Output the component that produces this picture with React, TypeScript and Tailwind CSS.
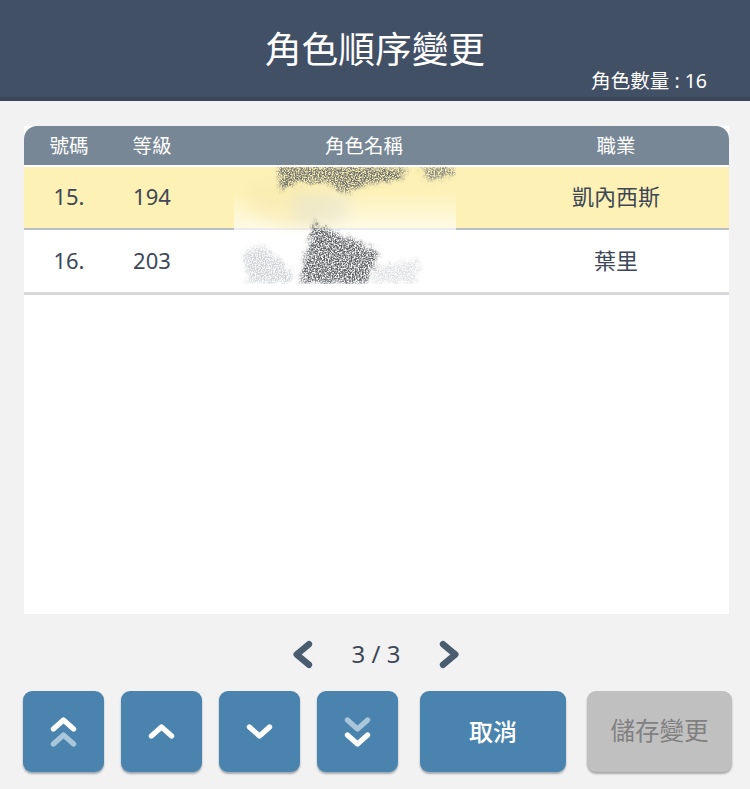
import React from "react";

const FONT = "[font-family:'Noto_Sans','Noto_Sans_CJK_TC',sans-serif]";

function Chevron({ dir, className = "", w = 24 }: { dir: "up" | "down" | "left" | "right"; className?: string; w?: number }) {
  const d = {
    up: "M3 12 L12 4 L21 12",
    down: "M3 4 L12 12 L21 4",
    left: "M13 4 L3.5 12 L13 20",
    right: "M3 4 L12.5 12 L3 20",
  }[dir];
  return (
    <svg width={w} height={w} viewBox={dir === "up" || dir === "down" ? "0 0 24 16" : "0 0 16 24"} className={className} fill="none">
      <path d={d} stroke="currentColor" strokeWidth={dir === "left" || dir === "right" ? 5 : 4.6} strokeLinecap="round" strokeLinejoin="round" />
    </svg>
  );
}

function SquareButton({ children }: { children: React.ReactNode }) {
  return (
    <button className="w-[81px] h-[81px] rounded-[9px] bg-[#4a84ae] shadow-[0_2px_2px_rgba(60,80,100,0.45)] flex flex-col items-center justify-center text-white">
      {children}
    </button>
  );
}

function Art() {
  return (
    <svg className="absolute left-[234px] top-[167px] pointer-events-none" width="222" height="117" viewBox="0 0 222 117">
      <defs>
        <linearGradient id="fade" x1="0" y1="0" x2="0" y2="1">
          <stop offset="0" stopColor="#fff" stopOpacity="0" />
          <stop offset="0.22" stopColor="#fff" stopOpacity="0.04" />
          <stop offset="0.3" stopColor="#fff" stopOpacity="0.2" />
          <stop offset="0.5" stopColor="#fff" stopOpacity="0.6" />
          <stop offset="0.6" stopColor="#fff" stopOpacity="0.95" />
          <stop offset="1" stopColor="#fff" stopOpacity="1" />
        </linearGradient>
        <filter id="grain" x="-10%" y="-10%" width="120%" height="120%">
          <feGaussianBlur in="SourceGraphic" stdDeviation="2.5" result="b" />
          <feTurbulence type="fractalNoise" baseFrequency="0.14" numOctaves="2" seed="7" result="w" />
          <feDisplacementMap in="b" in2="w" scale="10" xChannelSelector="R" yChannelSelector="G" result="d" />
          <feTurbulence type="fractalNoise" baseFrequency="0.7" numOctaves="2" seed="4" result="n" />
          <feColorMatrix in="n" type="matrix" values="0 0 0 0 0 0 0 0 0 0 0 0 0 0 0 0 0 0 3.2 -1" result="m" />
          <feComposite in="d" in2="m" operator="in" />
          <feGaussianBlur stdDeviation="0.6" />
        </filter>
        <filter id="soft" x="-30%" y="-30%" width="160%" height="160%"><feGaussianBlur stdDeviation="7" /></filter>
      </defs>
      <rect x="0" y="0" width="222" height="117" fill="url(#fade)" />
      <path d="M14 16 L60 16 L100 30 L90 52 L50 58 L16 46 Z" fill="#f8eaae" opacity="0.6" filter="url(#soft)" />
      <path d="M60 26 L120 28 L108 56 L60 58 Z" fill="#e8e5d0" opacity="0.6" filter="url(#soft)" />
      <g filter="url(#grain)">
        <path d="M44 0 L172 0 L168 12 L130 18 L112 26 L92 15 L60 16 L46 24 Z" fill="#6e716c" />
        <path d="M186 0 L222 0 L220 8 L196 14 Z" fill="#8a8b80" />
        <path d="M78 56 L144 84 L140 100 L132 116 L66 116 L70 92 L76 76 Z" fill="#5f6265" />
        <path d="M10 84 L28 78 L58 104 L58 116 L14 116 Z" fill="#cfd1d5" />
        <path d="M140 100 L186 92 L182 116 L140 116 Z" fill="#dfe0e2" />
      </g>
    </svg>
  );
}

function Row({ no, lv, job, bg, border }: { no: string; lv: string; job: string; bg: string; border: string }) {
  return (
    <div className={`grid grid-cols-[90px_76px_348px_156px] items-center text-[22px] text-[#3d4757] ${bg} ${border}`}>
      <span className="text-center">{no}</span>
      <span className="text-center">{lv}</span>
      <span />
      <span className="text-center">{job}</span>
    </div>
  );
}

export default function App() {
  return (
    <div className={`relative w-[750px] h-[789px] overflow-hidden bg-[#f2f2f2] flex flex-col ${FONT}`}>
      <header className="relative h-[101px] shrink-0 bg-[#425066] border-b-[4px] border-[#39465a] flex items-start justify-center">
        <h1 className="mt-[23px] text-[36.7px] leading-[52px] font-normal text-white">角色順序變更</h1>
        <span className="absolute right-[43px] top-[67px] text-[19.5px] leading-[28px] text-white">角色數量 : 16</span>
      </header>

      <main className="mx-[24px] mt-[25px] w-[705px] h-[488px] bg-white flex flex-col">
        <div className="h-[39px] shrink-0 rounded-t-[13px] bg-[#788796] grid grid-cols-[90px_76px_348px_156px] items-center text-[19.5px] text-white">
          <span className="text-center">號碼</span>
          <span className="text-center">等級</span>
          <span className="text-center">角色名稱</span>
          <span className="text-center">職業</span>
        </div>
        <div className="h-[2px] shrink-0 bg-white" />
        <Row no="15." lv="194" job="凱內西斯" bg="bg-[#fdf1b5] h-[63px] pb-[2px]" border="border-b-[2px] border-[#b9bfc8]" />
        <Row no="16." lv="203" job="葉里" bg="bg-white h-[65px] pb-[1px]" border="border-b-[3px] border-[#d6d8dc]" />
      </main>

      <Art />

      <div className="mt-[18px] ml-[2px] h-[44px] flex items-center justify-center text-[#4a5d70]">
        <Chevron dir="left" w={31} />
        <span className="mx-[31px] w-[54px] text-center text-[24px] text-[#3d4757]">3 / 3</span>
        <Chevron dir="right" w={31} />
      </div>

      <div className="ml-[23px] mt-[15px] flex items-start">
        <div className="flex gap-[17px]">
          <SquareButton>
            <Chevron dir="up" w={27} className="-mb-[12px] relative z-10" />
            <Chevron dir="up" w={27} className="text-[#aac6da]" />
          </SquareButton>
          <SquareButton>
            <Chevron dir="up" w={27} />
          </SquareButton>
          <SquareButton>
            <Chevron dir="down" w={27} />
          </SquareButton>
          <SquareButton>
            <Chevron dir="down" w={27} className="-mb-[12px] text-[#aac6da]" />
            <Chevron dir="down" w={27} className="relative z-10" />
          </SquareButton>
        </div>
        <button className="ml-[22px] w-[146px] h-[81px] rounded-[9px] bg-[#4a84ae] shadow-[0_2px_2px_rgba(60,80,100,0.45)] text-white text-[24px] font-medium">取消</button>
        <button className="ml-[21px] w-[145px] h-[81px] rounded-[9px] bg-[#c0c0c0] shadow-[0_2px_2px_rgba(80,80,80,0.45)] text-[#808080] text-[24.5px]">儲存變更</button>
      </div>
    </div>
  );
}
